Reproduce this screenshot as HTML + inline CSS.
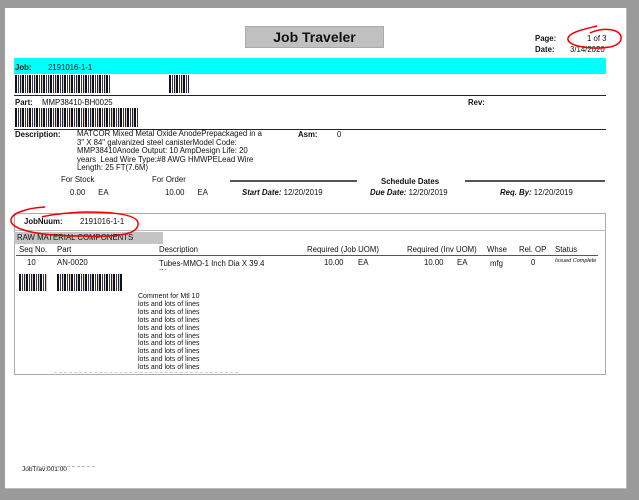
<!DOCTYPE html>
<html><head><style>
body{margin:0;width:639px;height:500px;background:#9a9a9a;position:relative;overflow:hidden;font-family:"Liberation Sans",Arial,sans-serif;font-size:7.8px;color:#111}
.pg{position:absolute;left:5px;top:8px;width:621px;height:480px;background:#fff;border-right:1px solid #bbb;border-bottom:1px solid #bbb}
.a{position:absolute;white-space:nowrap}
.b{font-weight:bold}
.bc{position:absolute;background:repeating-linear-gradient(90deg,#111 0 2px,#fff 2px 3px,#335 3px 4px,#fff 4px 5px,#222 5px 6px,#d8c8c8 6px 7px)}
.hl{position:absolute;height:1px;background:#222}
</style></head><body>
<div class="pg"></div>
<div class="a b" style="left:245px;top:26px;width:139px;height:22px;background:#c0c0c0;border:1px solid #aaa;box-sizing:border-box;text-align:center;font-size:14px;line-height:21px">Job Traveler</div>
<div class="a b" style="left:535px;top:34px">Page:</div>
<div class="a b" style="left:535px;top:45px">Date:</div>
<div class="a" style="left:587px;top:34px">1 of 3</div>
<div class="a" style="left:570px;top:45px">3/14/2020</div>
<div class="a" style="left:14px;top:58px;width:592px;height:16px;background:#00ffff"></div>
<div class="a b" style="left:15px;top:63px">Job:</div>
<div class="a" style="left:48px;top:63px">2191016-1-1</div>
<div class="bc" style="left:15px;top:75px;width:95px;height:18px"></div>
<div class="bc" style="left:169px;top:75px;width:20px;height:18px"></div>
<div class="hl" style="left:14px;top:95px;width:592px"></div>
<div class="a b" style="left:15px;top:98px">Part:</div>
<div class="a" style="left:42px;top:98px">MMP38410-BH0025</div>
<div class="a b" style="left:468px;top:98px">Rev:</div>
<div class="bc" style="left:15px;top:108px;width:123px;height:19px"></div>
<div class="hl" style="left:14px;top:129px;width:592px"></div>
<div class="a b" style="left:15px;top:130px">Description:</div>
<div class="a" style="left:77px;top:130px;line-height:8.5px">MATCOR Mixed Metal Oxide AnodePrepackaged in a<br>3" X 84" galvanized steel canisterModel Code:<br>MMP38410Anode Output: 10 AmpDesign Life: 20<br>years&nbsp; Lead Wire Type:#8 AWG HMWPELead Wire<br>Length: 25 FT(7.6M)</div>
<div class="a b" style="left:298px;top:130px">Asm:</div>
<div class="a" style="left:337px;top:130px">0</div>
<div class="a" style="left:61px;top:175px">For Stock</div>
<div class="a" style="left:152px;top:175px">For Order</div>
<div class="hl" style="left:230px;top:180px;width:127px;height:2px;background:#555"></div>
<div class="hl" style="left:465px;top:180px;width:140px;height:2px;background:#555"></div>
<div class="a b" style="left:381px;top:177px">Schedule Dates</div>
<div class="a" style="left:70px;top:188px">0.00&nbsp;&nbsp;&nbsp;&nbsp;&nbsp; EA</div>
<div class="a" style="left:165px;top:188px">10.00&nbsp;&nbsp;&nbsp;&nbsp;&nbsp; EA</div>
<div class="a" style="left:242px;top:188px"><b><i>Start Date:</i></b> 12/20/2019</div>
<div class="a" style="left:370px;top:188px"><b><i>Due Date:</i></b> 12/20/2019</div>
<div class="a" style="left:500px;top:188px"><b><i>Req. By:</i></b> 12/20/2019</div>
<div class="a" style="left:14px;top:213px;width:592px;height:162px;border:1px solid #aaa;box-sizing:border-box"></div>
<div class="hl" style="left:14px;top:230px;width:592px;background:#bbb"></div>
<div class="a b" style="left:24px;top:217px">JobNuum:</div>
<div class="a" style="left:80px;top:217px">2191016-1-1</div>
<div class="a" style="left:14px;top:232px;width:149px;height:12px;background:#c4c4c4"></div>
<div class="a" style="left:17px;top:233px">RAW MATERIAL COMPONENTS</div>
<div class="a" style="left:19px;top:245px">Seq No.</div>
<div class="a" style="left:57px;top:245px">Part</div>
<div class="a" style="left:159px;top:245px">Description</div>
<div class="a" style="left:307px;top:245px">Required (Job UOM)</div>
<div class="a" style="left:407px;top:245px">Required (Inv UOM)</div>
<div class="a" style="left:487px;top:245px">Whse</div>
<div class="a" style="left:519px;top:245px">Rel. OP</div>
<div class="a" style="left:555px;top:245px">Status</div>
<div class="hl" style="left:16px;top:255px;width:582px;background:#555"></div>
<div class="a" style="left:27px;top:258px">10</div>
<div class="a" style="left:57px;top:258px">AN-0020</div>
<div class="a" style="left:159px;top:259px;height:11px;overflow:hidden">Tubes-MMO-1 Inch Dia X 39.4<br>IN</div>
<div class="a" style="left:324px;top:258px">10.00</div>
<div class="a" style="left:358px;top:258px">EA</div>
<div class="a" style="left:424px;top:258px">10.00</div>
<div class="a" style="left:457px;top:258px">EA</div>
<div class="a" style="left:490px;top:259px">mfg</div>
<div class="a" style="left:531px;top:258px">0</div>
<div class="a" style="left:555px;top:258px;font-size:5.5px;font-style:italic">Issued Complete</div>
<div class="bc" style="left:19px;top:274px;width:28px;height:17px"></div>
<div class="bc" style="left:57px;top:274px;width:65px;height:17px"></div>
<div class="a" style="left:138px;top:293px;font-size:7px;line-height:7.9px">Comment for Mtl 10<br>lots and lots of lines<br>lots and lots of lines<br>lots and lots of lines<br>lots and lots of lines<br>lots and lots of lines<br>lots and lots of lines<br>lots and lots of lines<br>lots and lots of lines<br>lots and lots of lines</div>
<div class="a" style="left:54px;top:372px;width:184px;height:1px;border-top:1px dashed #ccc"></div>
<div class="a" style="left:22px;top:466px;width:73px;border-top:1px dashed #bbb"></div>
<div class="a" style="left:22px;top:466px;font-size:6.5px">JobTrav:001:00</div>
<svg style="position:absolute;left:0;top:0" width="639" height="500">
<path d="M597 26 C585 29 570 32 568 38 C566 46 590 50 610 47 C625 44 624 32 612 30 C603 28 594 31 590 33" fill="none" stroke="#e00" stroke-width="1.5"/>
<path d="M45 207 C25 208 10 214 11 221 C12 230 40 236 80 236 C118 237 139 235 138 223 C137 214 110 212 85 212 C60 213 45 216 42 217" fill="none" stroke="#e00" stroke-width="1.5"/>
</svg>
</body></html>
